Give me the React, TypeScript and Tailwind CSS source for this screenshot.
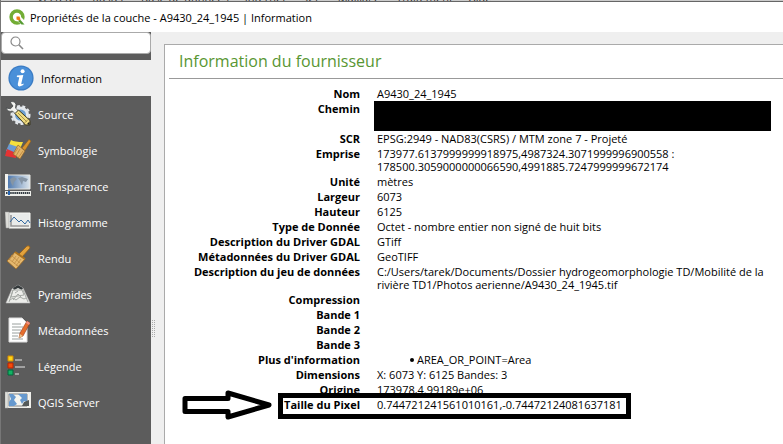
import React from "react";

const menus = ["Vecteur", "Raster", "Base de données", "Internet", "SCP", "Maillage", "Traitement", "Aide"];

const sections = [
  { label: "Information", icon: <InfoIcon /> },
  { label: "Source", icon: <SourceIcon /> },
  { label: "Symbologie", icon: <SymbologyIcon /> },
  { label: "Transparence", icon: <TransparencyIcon /> },
  { label: "Histogramme", icon: <HistogramIcon /> },
  { label: "Rendu", icon: <BrushIcon /> },
  { label: "Pyramides", icon: <PyramidIcon /> },
  { label: "Métadonnées", icon: <MetadataIcon /> },
  { label: "Légende", icon: <LegendIcon /> },
  { label: "QGIS Server", icon: <ServerIcon /> },
];

const rows: [string, React.ReactNode][] = [
  ["SCR", "EPSG:2949 - NAD83(CSRS) / MTM zone 7 - Projeté"],
  ["Emprise", "173977.6137999999918975,4987324.3071999996900558 :\n178500.3059000000066590,4991885.7247999999672174"],
  ["Unité", "mètres"],
  ["Largeur", "6073"],
  ["Hauteur", "6125"],
  ["Type de Donnée", "Octet - nombre entier non signé de huit bits"],
  ["Description du Driver GDAL", "GTiff"],
  ["Métadonnées du Driver GDAL", "GeoTIFF"],
  ["Description du jeu de données", "C:/Users/tarek/Documents/Dossier hydrogeomorphologie TD/Mobilité de la rivière TD1/Photos aerienne/A9430_24_1945.tif"],
  ["Compression", ""],
  ["Bande 1", ""],
  ["Bande 2", ""],
  ["Bande 3", ""],
  ["Plus d'information", <ul className="pl-8"><li className="flex items-center gap-[3px]"><span className="ml-px size-1 rounded-full bg-black" />AREA_OR_POINT=Area</li></ul>],
  ["Dimensions", "X: 6073 Y: 6125 Bandes: 3"],
  ["Origine", "173978,4.99189e+06"],
];

function Icon({ children }: { children: React.ReactNode }) {
  return <svg viewBox="0 0 26 26" className="size-[26px] shrink-0" aria-hidden="true">{children}</svg>;
}

function InfoIcon() {
  return (
    <Icon>
      <circle cx="13" cy="13" r="12.6" fill="#3b7cc4" />
      <circle cx="13" cy="13" r="11.3" fill="#4a90d9" />
      <circle cx="14.600" cy="6.300" r="2" fill="#fff" />
      <path d="M9 10.600 15.300 10 13.300 18.500q-.2 1.300 2.400-.1l-.4 1.600q-6 3.200-5.500-1l1.500-6.700-2.500-.3z" fill="#fff" />
    </Icon>
  );
}

function SourceIcon() {
  return (
    <Icon>
      <circle cx="15.500" cy="14" r="7" fill="#6d9fd0" stroke="#e4e8ec" strokeWidth="3" />
      <circle cx="15.500" cy="14" r="9" fill="none" stroke="#e4e8ec" strokeWidth="2" strokeDasharray="3 2.500" />
      <path d="M5 1q5-1.500 6 2.500l-.5 3.500 4 4-3 3-4-4Q3 11.500 1 7l4.500.8L8 5z" fill="#f4f4f1" stroke="#44484a" strokeWidth=".8" />
      <path d="M10 12.500 13.500 9 25 19.500v4.500h-4.500z" fill="#f0dc80" stroke="#3e3a22" strokeWidth="1" />
      <path d="m13 12 9 9M23 18.500l-3.500 3.500" stroke="#a8924a" strokeWidth="1" />
      <path d="m22 23 2.500-2.500V24z" fill="#222" />
    </Icon>
  );
}

function SymbologyIcon() {
  return (
    <Icon>
      <path d="M6 3q4 2 12 2l-3 7-11-4z" fill="#f5df3c" />
      <path d="m4 7 9 3-4 7-8-3z" fill="#6b9bd2" />
      <path d="m2 12 9 4v5l-11-2z" fill="#e53333" />
      <path d="M17 11 24 2.500l2 1.500-6 9.500z" fill="#d9942b" stroke="#8f5b14" strokeWidth=".5" />
      <path d="m13 8 7 6-5 8-7-5z" fill="#e3b568" stroke="#946426" strokeWidth=".7" />
      <path d="m13 11-4 6m6-5-4 7m7-5-5 7" stroke="#b47e36" strokeWidth=".7" />
    </Icon>
  );
}

function TransparencyIcon() {
  return (
    <Icon>
      <defs><linearGradient id="fade"><stop stopColor="#426fa9" /><stop offset="1" stopColor="#dce5ec" /></linearGradient></defs>
      <path d="M1 2h24v14H1z" fill="url(#fade)" stroke="#e7e7e2" />
      <path d="M0 1h3v16H0z" fill="#f3f3ef" />
      <path d="m5 6 4-2 3 2-3 3-1 4-2-3zm8-1 4-1 6 2-2 3-3-1-1 4-2-4z" fill="#8595a5" />
      <path d="M0 18h26v5H0z" fill="#edeeea" />
      <path d="M1 20h24" stroke="#333b42" strokeWidth="2" strokeDasharray="1.500 .6" />
      <path d="M3 18h2v4H3z" fill="#2464b2" />
    </Icon>
  );
}

function HistogramIcon() {
  return (
    <Icon>
      <path d="M2 4h23v15H4l-2-2z" fill="#e9ebea" stroke="#f8f8f4" />
      <path d="M0 3h4v16H1z" fill="#dededa" stroke="#999" strokeWidth=".5" />
      <path d="M6 6v11h18" fill="none" stroke="#999" strokeWidth="1.600" />
      <path d="m5 13 4-5 5 5 2-2 4 4 3-4 2 3" fill="none" stroke="#34699f" strokeWidth="1" />
    </Icon>
  );
}

function BrushIcon() {
  return (
    <Icon>
      <path d="m13 10 9-9q3-1 3 2l-8 9z" fill="#e3a23c" stroke="#976018" strokeWidth=".8" />
      <path d="m10 7 10 7-9 10-9-8z" fill="#e5b86e" stroke="#9b6825" strokeWidth=".8" />
      <path d="m9 9-5 6m7-4-4 6m7-5-5 7m7-5-5 7M6 10l9 8M4 14l9 7" stroke="#ba863f" strokeWidth=".7" />
      <path d="m10 7 10 7" stroke="#ad731d" strokeWidth="2" />
    </Icon>
  );
}

function PyramidIcon() {
  return (
    <Icon>
      <path d="m7 8 6-4 5 3 7 15H1z" fill="#ecedea" stroke="#bbb" strokeWidth=".6" />
      <path d="m8 7 5-3 5 3-1 2-4-2-4 2z" fill="#33383a" />
      <path d="m8 9 9 0 2 5-13 2zm0 0-4 12m14-12 5 12M5 19l3-2 3 2 4-3 4 2 2-1M10 12l3-2m-5 9 5-6 3 3" stroke="#a5a9a5" strokeWidth="1" fill="none" />
    </Icon>
  );
}

function MetadataIcon() {
  return (
    <Icon>
      <path d="M4 1h13l5 5v19H4z" fill="#fff" stroke="#ddd" />
      <path d="M7 7h9M7 10h11M7 13h9M7 16h10M7 19h6M7 22h11" stroke="#9aa09e" strokeWidth="1" />
      <path d="m22 4 3 2-7 13-4 2 1-5z" fill="#e66e2d" stroke="#923b20" strokeWidth=".6" />
      <path d="m14 21 4-2-3-2z" fill="#e7c28b" />
      <path d="m22 4 3 2-1 2-3-2z" fill="#ef8f83" />
    </Icon>
  );
}

function LegendIcon() {
  return (
    <Icon>
      <path d="M3 3h5v5H3z" fill="#fcd51b" stroke="#d68b00" />
      <path d="M3 10h5v5H3z" fill="#f54a08" stroke="#ba2300" />
      <path d="M3 17h5v5H3z" fill="#13b263" stroke="#00683a" />
      <path d="M10 7h7M10 14h10M10 21h4" stroke="#a1a1a1" strokeWidth="2" />
    </Icon>
  );
}

function ServerIcon() {
  return (
    <Icon>
      <path d="M2 4h23v14H2z" fill="#f5f5f0" stroke="#efefeb" strokeWidth="2" />
      <path d="M4 5h18v12H4z" fill="#f5f5f0" stroke="#555" strokeWidth=".7" />
      <path d="M4 5h4l3 3-2 3 3 4-3 2H4v-4l2-3zm9 0h9v8l-3-1-2 3-2-4 2-2z" fill="#6799ce" />
      <path d="m17 17 2-4 5-2v6z" fill="#555a5a" />
      <path d="M0 3h3v16H0z" fill="#dedfda" stroke="#aaa" strokeWidth=".5" />
    </Icon>
  );
}

function QgisLogo() {
  return (
    <svg viewBox="0 0 16 16" className="size-4" aria-hidden="true">
      <circle cx="8" cy="8" r="5.900" fill="none" stroke="#73ad35" strokeWidth="3.500" />
      <path d="M7 7h4l5 5v4h-3L7 11z" fill="#fff" />
      <path d="M11 10.500 15.500 15.500H12.500L9 12z" fill="#569b32" />
      <path d="M7.500 7.500h3l1 3-1 1-3-1z" fill="#ee7913" />
    </svg>
  );
}

function PropertyRow({ label, children }: { label: string; children?: React.ReactNode }) {
  return (
    <tr className="align-top">
      <th scope="row" className="py-px pr-[17px] text-right font-bold whitespace-nowrap">{label}</th>
      <td className="h-[15px] py-px whitespace-pre-line">{children}</td>
    </tr>
  );
}

export default function App() {
  return (
    <div className="flex min-h-screen flex-col border-l border-[#777] bg-[#efefef] font-['Open_Sans','Noto_Sans',sans-serif] text-[11px] leading-[13px] text-black">
      <div className="flex h-px items-end gap-4 overflow-hidden bg-[#cbcbcb] pl-9 leading-[7px] text-[#333]">
        {menus.map((menu) => <span key={menu}>{menu}</span>)}
      </div>
      <header className="flex h-[31px] items-center gap-[5px] border-t border-[#666] bg-white pl-2">
        <QgisLogo />
        <h1>Propriétés de la couche - A9430_24_1945 | Information</h1>
      </header>
      <div className="flex grow">
        <aside className="flex w-[150px] shrink-0 flex-col bg-[#5c5c5c]">
          <label className="flex h-[22px] items-center rounded-sm border border-[#aaa] bg-white pl-2">
            <svg viewBox="0 0 14 14" className="size-[14px] shrink-0" fill="none" stroke="#888" strokeWidth="1.200" aria-hidden="true"><circle cx="5.500" cy="5.500" r="4.500" /><path d="m8.800 8.800 4.200 4.200" strokeWidth="1.600" /></svg>
            <input type="search" aria-label="Rechercher" className="min-w-0 grow bg-transparent px-1 outline-none" />
          </label>
          <nav className="mt-1.5 flex flex-col">
            {sections.map(({ label, icon }, i) => (
              <button key={label} type="button" className={i === 0 ? "flex h-9 items-center gap-[7px] bg-[#efefef] pl-[7px] text-black" : "flex h-9 items-center gap-[7px] pl-1 text-white"}>
                {icon}
                {label}
              </button>
            ))}
          </nav>
        </aside>
        <div className="flex w-[13px] shrink-0 items-center">
          <div className="mt-[181px] ml-px h-[17px] w-[3px] border-x border-dotted border-[#aaa]" />
        </div>
        <main className="mt-3 min-w-0 grow border-t border-l border-[#aaa] bg-white pl-1">
          <h2 className="h-[34px] border-b border-[#999] pt-1.5 pl-2.5 text-base leading-5 text-[#589632]">Information du fournisseur</h2>
          <table className="mt-[7px] w-full table-fixed border-collapse">
            <colgroup>
              <col className="w-[208px]" />
              <col />
            </colgroup>
            <tbody>
              <PropertyRow label="Nom">A9430_24_1945</PropertyRow>
              <tr className="align-top">
                <th scope="row" className="py-px pr-[17px] text-right font-bold">Chemin</th>
                <td className="pr-3"><div className="-ml-[3px] h-[30px] bg-black" /></td>
              </tr>
              {rows.map(([label, value]) => <PropertyRow key={label} label={label}>{value}</PropertyRow>)}
              <tr className="align-top">
                <th scope="row" className="relative py-px pr-[17px] text-right font-bold">
                  Taille du Pixel
                  <svg viewBox="0 0 90 30" className="absolute -top-[7px] left-[13px] h-[30px] w-[90px]" fill="#fff" stroke="#000" strokeWidth="5" strokeLinejoin="round" aria-hidden="true">
                    <path d="M3 8.500h43V3l41 12-41 12v-5.500H3z" />
                  </svg>
                  <div className="absolute -top-1 left-[109px] h-[26px] w-[353px] border-[5px] border-black" />
                </th>
                <td className="py-px">0.744721241561010161,-0.74472124081637181</td>
              </tr>
            </tbody>
          </table>
        </main>
      </div>
    </div>
  );
}
